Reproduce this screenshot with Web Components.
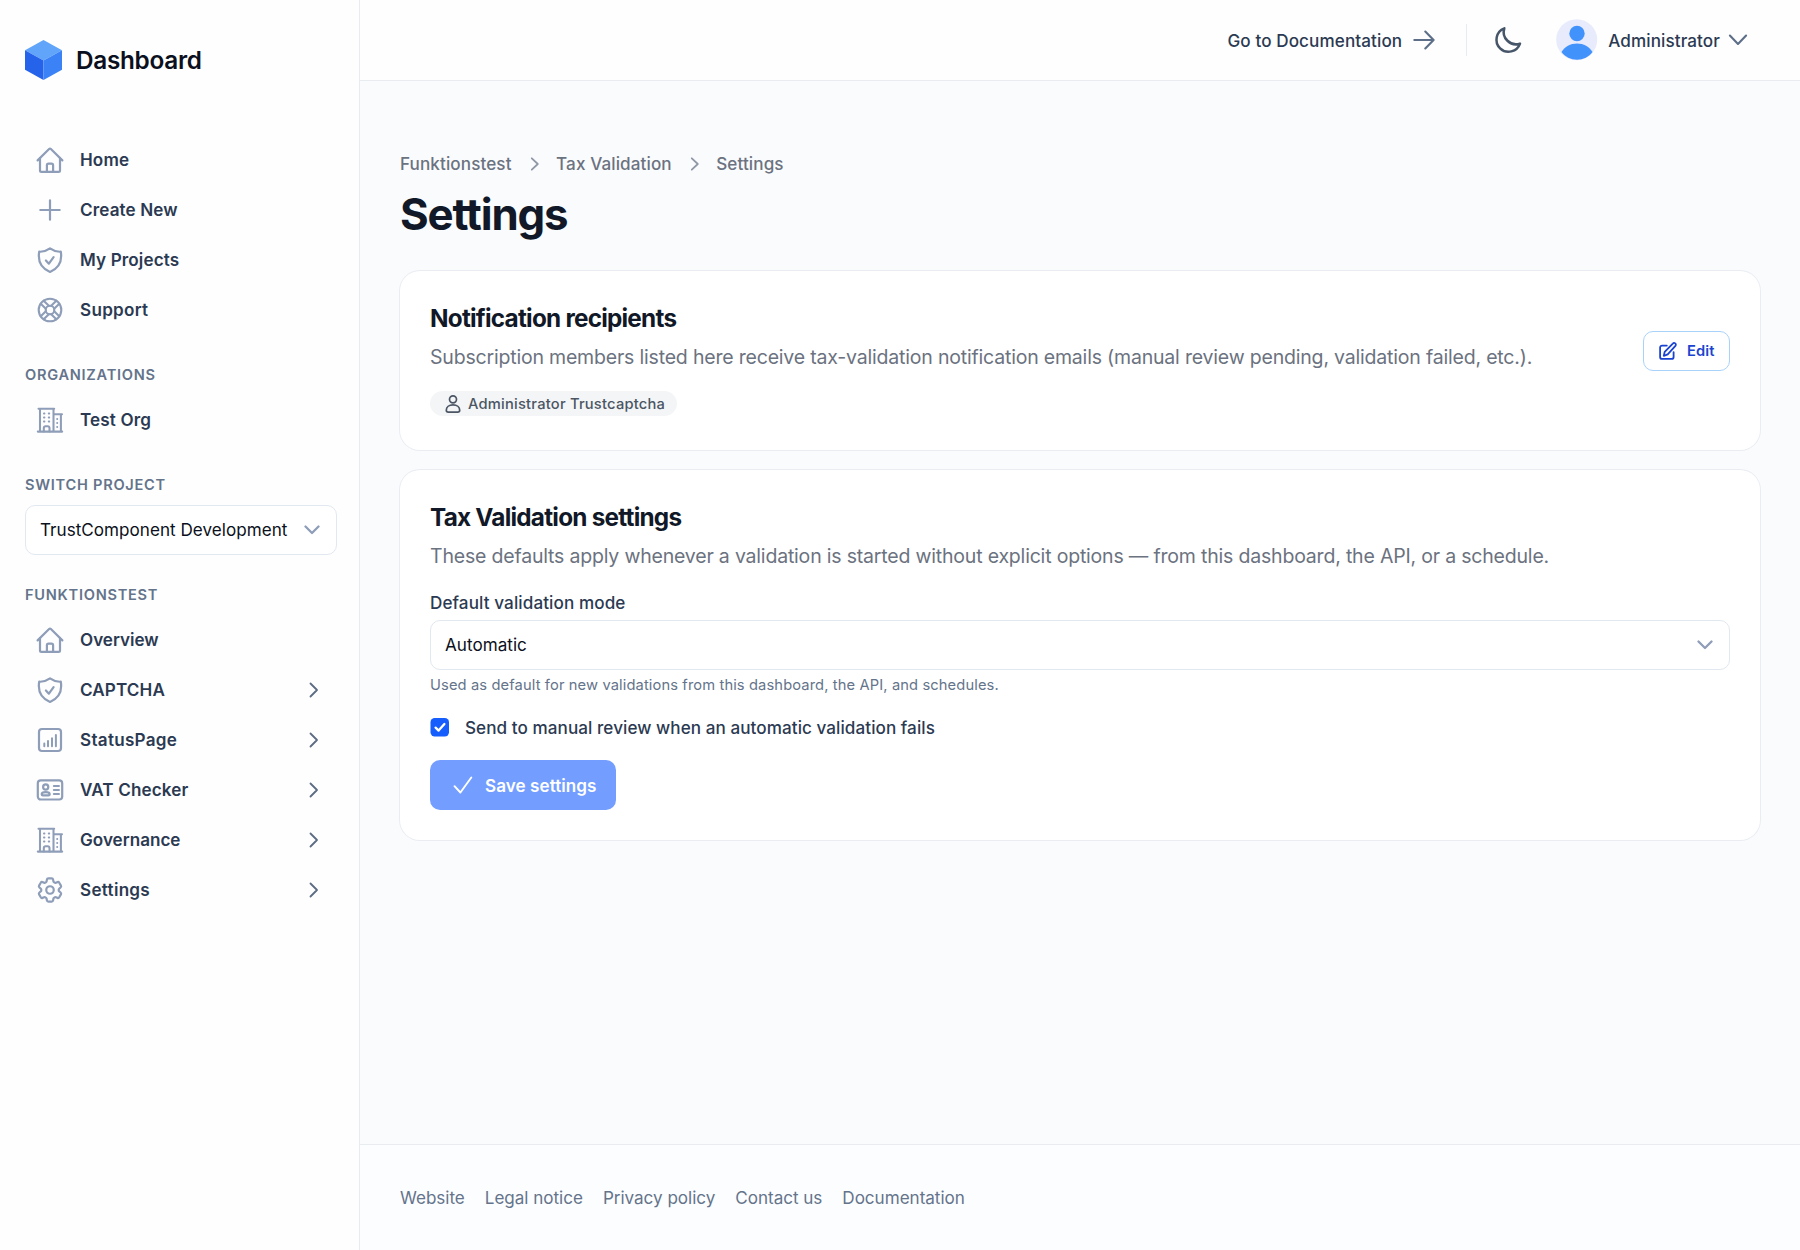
<!DOCTYPE html>
<html lang="en">
<head>
<meta charset="utf-8">
<title>Settings - Dashboard</title>
<style>
  body {
    margin: 0;
    font-family: Inter, "Liberation Sans", sans-serif;
    color: #0f172a;
    background: #fafbfd;
  }

  .wide {
    letter-spacing: 0.28px;
  }

  .tight {
    letter-spacing: 0;
  }
</style>
</head>
<body>
<app-shell>
  <app-sidebar slot="sidebar">
    <nav-item icon="home">Home</nav-item>
    <nav-item icon="plus">Create New</nav-item>
    <nav-item icon="shield">My Projects</nav-item>
    <nav-item icon="buoy" class="wide">Support</nav-item>
    <nav-heading>ORGANIZATIONS</nav-heading>
    <nav-item icon="building">Test Org</nav-item>
    <nav-heading>SWITCH PROJECT</nav-heading>
    <select-box>TrustComponent Development</select-box>
    <nav-heading>FUNKTIONSTEST</nav-heading>
    <nav-item icon="home" class="tight">Overview</nav-item>
    <nav-item icon="shield" more>CAPTCHA</nav-item>
    <nav-item icon="chart" class="wide" more>StatusPage</nav-item>
    <nav-item icon="idcard" more>VAT Checker</nav-item>
    <nav-item icon="building" class="tight" more>Governance</nav-item>
    <nav-item icon="gear" class="wide" more>Settings</nav-item>
  </app-sidebar>

  <app-header slot="header" user="Administrator">Go to Documentation</app-header>

  <page-title>
    <span slot="crumb">Funktionstest</span>
    <span slot="crumb2">Tax Validation</span>
    <span slot="crumb3">Settings</span>
    <span>Settings</span>
  </page-title>

  <settings-card>
    <span slot="title">Notification recipients</span>
    <span slot="text">Subscription members listed here receive tax-validation notification emails (manual review pending, validation failed, etc.).</span>
    <user-chip>Administrator Trustcaptcha</user-chip>
    <edit-button slot="action">Edit</edit-button>
  </settings-card>

  <settings-card>
    <span slot="title">Tax Validation settings</span>
    <span slot="text">These defaults apply whenever a validation is started without explicit options — from this dashboard, the API, or a schedule.</span>
    <validation-form></validation-form>
  </settings-card>

  <app-footer slot="footer">
    <a>Website</a>
    <a>Legal notice</a>
    <a>Privacy policy</a>
    <a>Contact us</a>
    <a>Documentation</a>
  </app-footer>
</app-shell>

<script>
  function attach(element, html) {
    const template = document.createElement('template');
    template.innerHTML = html;
    element.attachShadow({ mode: 'open' });
    element.shadowRoot.appendChild(template.content.cloneNode(true));
  }

  // Each icon: [width, height, stroke width, markup]
  const ICONS = {
    home: [28, 28, 2.2, '<path d="M1.6 14.4 13.1 3a1.3 1.3 0 0 1 1.8 0l11.5 11.4"/><path d="M4 12.4v12.1c0 .8.6 1.4 1.4 1.4h17.2c.8 0 1.4-.6 1.4-1.4V12.4"/><path d="M10.900 25.600v-6.200c0-1 .7-1.700 1.700-1.700h2.800c1 0 1.700.7 1.700 1.700v6.200"/>'],
    plus: [28, 28, 2.2, '<path d="M14 4.300v19.400M4.300 14h19.400"/>'],
    shield: [28, 28, 2.2, '<path d="M14 2.400C10.600 4.800 7 6 3.200 5.700c-1.500 9.300 1.300 16.300 10.800 20.200 9.500-3.900 12.300-10.900 10.800-20.200C21 6 17.400 4.800 14 2.400Z"/><path d="m9.900 14.500 3 3.200 4.700-6.600"/>'],
    buoy: [28, 28, 2.100, '<circle cx="14" cy="14" r="11.300"/><circle cx="14" cy="14" r="4.300"/><path transform="rotate(45 14 14)" d="M17.800 11.900h7.200M17.800 16.100h7.200M10.200 11.900H3M10.200 16.100H3M11.900 17.800v7.200M16.100 17.800v7.200M11.900 10.200V3M16.100 10.200V3"/>'],
    building: [28, 28, 2.050, '<path d="M1.800 25.600h24.400M2.500 2.700h15.700M4 2.700v23M17.500 2.700v23M18 8.300h8M24.900 8.300v17.500"/><path d="M7.800 25.500v-3.400c0-1.100.8-1.900 1.900-1.900h1.900c1.100 0 1.900.8 1.900 1.900v3.400"/><path stroke-width="1.800" d="M7.900 7.500h.6M12.700 7.500h.6M7.900 11.500h.6M12.700 11.500h.6M7.900 15.500h.6M12.700 15.500h.6M21.100 13h.2M21.100 17h.2M21.100 21h.2"/>'],
    chart: [28, 28, 2.2, '<rect x="3" y="3" width="22" height="22" rx="3"/><path stroke-width="2" d="M8.300 17.500v2.800M12 15v5.300M16 12.300v8M19.900 9v11.300"/>'],
    idcard: [28, 28, 2.2, '<rect x="1.800" y="4.300" width="24.400" height="19.200" rx="3"/><circle cx="9.700" cy="11" r="2.600"/><path d="M5.700 18.300c0-1.400 1.700-2.100 4-2.100s4 .7 4 2.100c0 .8-.6 1.100-1.300 1.100H7c-.7 0-1.300-.3-1.300-1.100ZM17.900 10h5M17.900 14h5M17.900 18h5"/>'],
    gear: [28, 28, 2.2, '<g transform="translate(-1.500 -1.500) scale(1.292)" stroke-width="1.700"><path d="M9.594 3.940c.09-.542.56-.94 1.110-.94h2.593c.55 0 1.020.398 1.110.94l.213 1.281c.063.374.313.686.645.87.074.04.147.083.22.127.325.196.72.257 1.075.124l1.217-.456a1.125 1.125 0 0 1 1.370.49l1.296 2.247a1.125 1.125 0 0 1-.26 1.431l-1.003.827c-.293.241-.438.613-.43.992a7.723 7.723 0 0 1 0 .255c-.008.378.137.75.43.991l1.004.827c.424.35.534.955.26 1.430l-1.298 2.247a1.125 1.125 0 0 1-1.369.491l-1.217-.456c-.355-.133-.75-.072-1.076.124a6.470 6.470 0 0 1-.22.128c-.331.183-.581.495-.644.869l-.213 1.281c-.09.543-.56.94-1.110.94h-2.594c-.55 0-1.019-.398-1.110-.94l-.213-1.281c-.062-.374-.312-.686-.644-.87a6.520 6.520 0 0 1-.22-.127c-.325-.196-.72-.257-1.076-.124l-1.217.456a1.125 1.125 0 0 1-1.369-.49l-1.297-2.247a1.125 1.125 0 0 1 .26-1.431l1.004-.827c.292-.24.437-.613.43-.991a6.932 6.932 0 0 1 0-.255c.007-.38-.138-.751-.43-.992l-1.004-.827a1.125 1.125 0 0 1-.26-1.430l1.297-2.247a1.125 1.125 0 0 1 1.370-.491l1.216.456c.356.133.751.072 1.076-.124.072-.044.146-.086.22-.128.332-.183.582-.495.644-.869l.214-1.280Z"/><circle cx="12" cy="12" r="2.900"/></g>'],
    right: [10, 16, 1.8, '<path d="m1.500 1.500 6.500 6.500-6.500 6.500"/>'],
    crumb: [10, 14, 1.800, '<path d="m1.800 1.300 6 5.700-6 5.700"/>'],
    down: [16, 10, 2.300, '<path d="m1.500 1.500 6.500 6.500 6.500-6.500"/>'],
    userdown: [20, 12, 2.1, '<path d="m1.900 1.600 8.100 8.400 8.100-8.400"/>'],
    arrow: [22, 20, 2.1, '<path d="M1.300 10h19M12.300 1.600l8.300 8.400-8.300 8.400"/>'],
    moon: [30, 30, 2.5, '<path d="M28 18.600A12.300 12.300 0 0 1 12.300 3.300 12.100 12.100 0 1 0 28 18.600Z"/>'],
    person: [16, 20, 1.7, '<circle cx="8" cy="5.300" r="3.500"/><path d="M1.300 16.200c0-3.200 2.700-5.300 6.700-5.300s6.700 2.100 6.700 5.300c0 1.300-.9 1.900-2 1.900H3.300c-1.100 0-2-.6-2-1.900Z"/>'],
    pencil: [20, 20, 1.8, '<path d="M8.800 4.600H4.100a2 2 0 0 0-2 2v9.300a2 2 0 0 0 2 2h9.500a2 2 0 0 0 2-2v-4.700"/><path d="M14.800 2.600a1.700 1.700 0 0 1 2.600 2.300L9.700 13.300l-3.900 1.500.9-3.900Z"/>'],
    tick: [20, 18, 1.9, '<path d="m1.500 10.200 5.900 6.300L18.300 1.500"/>']
  };

  class UiIcon extends HTMLElement {
    constructor() {
      super();
      const [width, height, stroke, markup] = ICONS[this.getAttribute('name')];
      attach(this, `
        <style>
          :host {
            display: block;
            flex: none;
          }

          svg {
            display: block;
          }
        </style>
        <svg width="${width}" height="${height}" viewBox="0 0 ${width} ${height}" fill="none" stroke="currentColor" stroke-width="${stroke}" stroke-linecap="round" stroke-linejoin="round">${markup}</svg>
      `);
    }
  }

  class AppShell extends HTMLElement {
    constructor() {
      super();
      attach(this, `
        <style>
          :host {
            display: grid;
            grid-template-columns: 360px 1fr;
            height: 1250px;
          }

          .page {
            display: flex;
            flex-direction: column;
            min-width: 0;
          }

          main {
            flex: 1;
            padding: 69px 40px 0;
          }
        </style>
        <slot name="sidebar"></slot>
        <div class="page">
          <slot name="header"></slot>
          <main><slot></slot></main>
          <slot name="footer"></slot>
        </div>
      `);
    }
  }

  class AppSidebar extends HTMLElement {
    constructor() {
      super();
      attach(this, `
        <style>
          :host {
            display: block;
            box-sizing: border-box;
            padding: 35px 22px 0 25px;
            background: #fefefe;
            border-right: 1px solid #e8ecf1;
            letter-spacing: 0.12px;
          }

          .brand {
            display: flex;
            align-items: center;
            gap: 14px;
            height: 50px;
            margin-bottom: 50px;
            font-size: 24.3px;
            font-weight: 600;
            letter-spacing: -0.28px;
            color: #0b1020;
          }
        </style>
        <div class="brand">
          <svg width="37" height="40" viewBox="0 0 37 40">
            <path fill="#60a5fa" d="M18.500 0 37 10.300 18.500 20.500 0 10.300z"/>
            <path fill="#2563eb" d="M0 10.300 18.500 20.500V40L0 29.700z"/>
            <path fill="#3b82f6" d="M37 10.300 18.500 20.500V40L37 29.700z"/>
          </svg>
          <span>Dashboard</span>
        </div>
        <slot></slot>
      `);
    }
  }

  class NavItem extends HTMLElement {
    constructor() {
      super();
      attach(this, `
        <style>
          :host {
            display: flex;
            align-items: center;
            height: 50px;
            padding: 0 18px 0 11px;
            font-size: 17.1px;
            font-weight: 600;
            color: #2b3a52;
          }

          span {
            margin-bottom: 1px;
          }

          .icon {
            color: #8e9db8;
            margin-right: 16px;
          }

          .more {
            margin-left: auto;
            color: #5d6b83;
          }
        </style>
        <ui-icon class="icon" name="${this.getAttribute('icon')}"></ui-icon>
        <span><slot></slot></span>
        ${this.hasAttribute('more') ? '<ui-icon class="more" name="right"></ui-icon>' : ''}
      `);
    }
  }

  class NavHeading extends HTMLElement {
    constructor() {
      super();
      attach(this, `
        <style>
          :host {
            display: block;
            margin: 30px 0 10px;
            font-size: 14.6px;
            line-height: 20px;
            font-weight: 600;
            letter-spacing: 0.73px;
            color: #64748b;
          }
        </style>
        <slot></slot>
      `);
    }
  }

  class SelectBox extends HTMLElement {
    constructor() {
      super();
      attach(this, `
        <style>
          :host {
            display: flex;
            align-items: center;
            justify-content: space-between;
            box-sizing: border-box;
            height: 50px;
            padding: 0 16px 0 14px;
            border: 1px solid #e2e8f0;
            border-radius: 10px;
            background: #fff;
            font-size: 17.1px;
            letter-spacing: 0.02px;
            color: #0b1020;
            white-space: nowrap;
          }

          span {
            margin-bottom: 1px;
          }

          ui-icon {
            color: #8e9db8;
          }
        </style>
        <span><slot></slot></span>
        <ui-icon name="down"></ui-icon>
      `);
    }
  }

  class AppHeader extends HTMLElement {
    constructor() {
      super();
      attach(this, `
        <style>
          :host {
            display: flex;
            align-items: center;
            justify-content: flex-end;
            height: 80px;
            padding-right: 52px;
            background: #fefefe;
            border-bottom: 1px solid #e8ecf1;
            font-size: 17.1px;
            font-weight: 500;
            letter-spacing: 0.1px;
            color: #2b3a52;
          }

          .arrow {
            margin-left: 11px;
            color: #5d6f88;
          }

          .line {
            width: 1px;
            height: 32px;
            margin: 0 25px 0 31px;
            background: #e8ecf1;
          }

          .moon {
            color: #475569;
          }

          .avatar {
            margin: 0 10px 0 34px;
          }

          .down {
            margin-left: 8px;
            color: #5d6f88;
          }
        </style>
        <span><slot></slot></span>
        <ui-icon class="arrow" name="arrow"></ui-icon>
        <div class="line"></div>
        <ui-icon class="moon" name="moon"></ui-icon>
        <svg class="avatar" width="42" height="42" viewBox="0 0 42 42">
          <circle cx="20.700" cy="20.700" r="20.500" fill="#e8ebfc"/>
          <circle cx="21" cy="14.500" r="7.700" fill="#4292fc"/>
          <path fill="#4292fc" d="M5.500 33c3-5.200 9-8.500 15.500-8.500S33.500 27.800 36.500 33c-3.500 4.800-9.300 7.700-15.500 7.700S9 37.800 5.500 33z"/>
        </svg>
        <span>${this.getAttribute('user')}</span>
        <ui-icon class="down" name="userdown"></ui-icon>
      `);
    }
  }

  class PageTitle extends HTMLElement {
    constructor() {
      super();
      attach(this, `
        <style>
          :host {
            display: block;
            margin-bottom: 31px;
          }

          .crumbs {
            display: flex;
            align-items: center;
            height: 28px;
            font-size: 17.1px;
            font-weight: 500;
            letter-spacing: 0.1px;
            color: #6b7280;
          }

          .crumbs ::slotted(span) {
            margin-bottom: 1px;
          }

          .crumbs ui-icon {
            margin: 0 16px 0 18.5px;
            color: #9098a8;
          }

          h1 {
            margin: 12px 0 0;
            font-size: 43.8px;
            line-height: 50px;
            font-weight: 700;
            letter-spacing: -1.15px;
            color: #111827;
          }
        </style>
        <div class="crumbs">
          <slot name="crumb"></slot>
          <ui-icon name="crumb"></ui-icon>
          <slot name="crumb2"></slot>
          <ui-icon name="crumb"></ui-icon>
          <slot name="crumb3"></slot>
        </div>
        <h1><slot></slot></h1>
      `);
    }
  }

  class SettingsCard extends HTMLElement {
    constructor() {
      super();
      attach(this, `
        <style>
          :host {
            display: flex;
            justify-content: space-between;
            align-items: center;
            padding: 30px;
            margin-bottom: 20px;
            border-radius: 20px;
            background: #fff;
            box-shadow: 0 0 0 1px #e9edf2;
          }

          .body {
            flex: 1;
          }

          h2 {
            margin: 2px 0 0;
            font-size: 24.3px;
            line-height: 30px;
            font-weight: 700;
            letter-spacing: -0.76px;
            color: #111827;
          }

          p {
            margin: 10px 0 20px;
            font-size: 19.5px;
            line-height: 28px;
            letter-spacing: -0.19px;
            color: #6b7280;
            white-space: nowrap;
          }
        </style>
        <div class="body">
          <h2><slot name="title"></slot></h2>
          <p><slot name="text"></slot></p>
          <slot></slot>
        </div>
        <slot name="action"></slot>
      `);
    }
  }

  class UserChip extends HTMLElement {
    constructor() {
      super();
      attach(this, `
        <style>
          :host {
            display: flex;
            align-items: center;
            gap: 7px;
            width: fit-content;
            height: 25px;
            margin-bottom: 4px;
            padding: 0 12px 0 15px;
            border-radius: 13px;
            background: #f3f5f7;
            font-size: 14.7px;
            font-weight: 500;
            letter-spacing: 0.22px;
            color: #4b5563;
          }
        </style>
        <ui-icon name="person"></ui-icon>
        <slot></slot>
      `);
    }
  }

  class EditButton extends HTMLElement {
    constructor() {
      super();
      attach(this, `
        <style>
          :host {
            display: flex;
            align-items: center;
            justify-content: space-between;
            box-sizing: border-box;
            width: 87px;
            height: 40px;
            margin-bottom: 19px;
            padding: 0 14.5px 0 14px;
            border: 1px solid #a9d2fb;
            border-radius: 10px;
            font-size: 14.7px;
            font-weight: 600;
            letter-spacing: 0.1px;
            color: #1a44d0;
          }
        </style>
        <ui-icon name="pencil"></ui-icon>
        <span><slot></slot></span>
      `);
    }
  }

  class ValidationForm extends HTMLElement {
    constructor() {
      super();
      attach(this, `
        <style>
          :host {
            display: block;
            color: #2b3a52;
          }

          .label {
            margin-bottom: 4px;
            font-size: 17.1px;
            line-height: 26px;
            font-weight: 500;
            letter-spacing: 0.1px;
          }

          .help {
            margin-top: 5px;
            font-size: 14.7px;
            line-height: 20px;
            letter-spacing: 0.12px;
            color: #64748b;
          }

          .check {
            display: flex;
            align-items: center;
            gap: 15px;
            height: 26px;
            margin: 19px 0 20px;
            font-size: 17.1px;
            font-weight: 500;
            letter-spacing: 0.065px;
          }

          .save {
            display: flex;
            align-items: center;
            gap: 12px;
            box-sizing: border-box;
            width: 186px;
            height: 50px;
            padding: 0 20px 0 23px;
            border: 0;
            border-radius: 10px;
            background: #739eff;
            font-family: inherit;
            font-size: 17.1px;
            font-weight: 600;
            letter-spacing: 0.05px;
            color: #fff;
            white-space: nowrap;
          }
        </style>
        <div class="label">Default validation mode</div>
        <select-box>Automatic</select-box>
        <div class="help">Used as default for new validations from this dashboard, the API, and schedules.</div>
        <div class="check">
          <svg width="20" height="20" viewBox="0 0 20 20">
            <rect x=".5" y="1.100" width="18.500" height="18.300" rx="4.200" fill="#155dfc"/>
            <path d="m5.600 10.600 3 3 5.800-6.600" fill="none" stroke="#fff" stroke-width="2.300" stroke-linecap="round" stroke-linejoin="round"/>
          </svg>
          <span>Send to manual review when an automatic validation fails</span>
        </div>
        <button class="save"><ui-icon name="tick"></ui-icon><span>Save settings</span></button>
      `);
    }
  }

  class AppFooter extends HTMLElement {
    constructor() {
      super();
      attach(this, `
        <style>
          :host {
            display: flex;
            gap: 20px;
            box-sizing: border-box;
            height: 106px;
            padding: 40px 40px 0;
            border-top: 1px solid #e8ecf1;
            background: #fcfdff;
            font-size: 17.1px;
            line-height: 26px;
            letter-spacing: -0.03px;
            color: #64748b;
          }
        </style>
        <slot></slot>
      `);
    }
  }

  customElements.define('ui-icon', UiIcon);
  customElements.define('app-shell', AppShell);
  customElements.define('app-sidebar', AppSidebar);
  customElements.define('nav-item', NavItem);
  customElements.define('nav-heading', NavHeading);
  customElements.define('select-box', SelectBox);
  customElements.define('app-header', AppHeader);
  customElements.define('page-title', PageTitle);
  customElements.define('settings-card', SettingsCard);
  customElements.define('user-chip', UserChip);
  customElements.define('edit-button', EditButton);
  customElements.define('validation-form', ValidationForm);
  customElements.define('app-footer', AppFooter);
</script>
</body>
</html>
